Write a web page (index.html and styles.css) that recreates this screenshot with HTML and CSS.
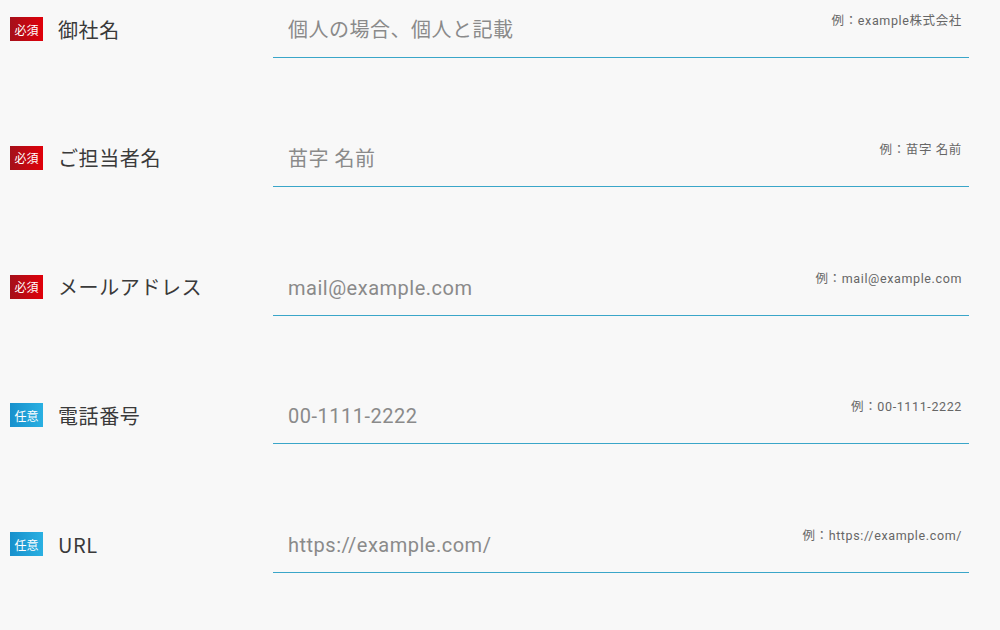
FILE: index.html
```html
<!DOCTYPE html>
<html lang="ja">
<head>
  <meta charset="UTF-8">
  <title>お問い合わせ</title>
  <link rel="stylesheet" href="styles.css">
</head>
<body>
  <form class="contact-form">
    <div class="form-row">
      <div class="form-label">
        <span class="badge badge-required">必須</span>
        <label for="company">御社名</label>
      </div>
      <div class="form-field">
        <input id="company" type="text" placeholder="個人の場合、個人と記載">
        <span class="example">例：example株式会社</span>
      </div>
    </div>

    <div class="form-row">
      <div class="form-label">
        <span class="badge badge-required">必須</span>
        <label for="name">ご担当者名</label>
      </div>
      <div class="form-field">
        <input id="name" type="text" placeholder="苗字 名前">
        <span class="example">例：苗字 名前</span>
      </div>
    </div>

    <div class="form-row">
      <div class="form-label">
        <span class="badge badge-required">必須</span>
        <label for="email">メールアドレス</label>
      </div>
      <div class="form-field">
        <input id="email" type="email" placeholder="mail@example.com">
        <span class="example">例：mail@example.com</span>
      </div>
    </div>

    <div class="form-row">
      <div class="form-label">
        <span class="badge badge-optional">任意</span>
        <label for="tel">電話番号</label>
      </div>
      <div class="form-field">
        <input id="tel" type="tel" placeholder="00-1111-2222">
        <span class="example">例：00-1111-2222</span>
      </div>
    </div>

    <div class="form-row">
      <div class="form-label">
        <span class="badge badge-optional">任意</span>
        <label for="url">URL</label>
      </div>
      <div class="form-field">
        <input id="url" type="url" placeholder="https://example.com/">
        <span class="example">例：https://example.com/</span>
      </div>
    </div>
  </form>
</body>
</html>
```

FILE: styles.css
```css
* {
  margin: 0;
  padding: 0;
  box-sizing: border-box;
}
body {
  font-family: "Noto Sans CJK JP", sans-serif;
  background-color: #f8f8f8;
  color: #333;
}
.contact-form {
  display: flex;
  flex-direction: column;
  gap: 70.75px;
}
.form-row {
  display: flex;
  align-items: center;
  height: 58px;
}
.form-label {
  display: flex;
  align-items: center;
  width: 273px;
  padding-left: 10px;
}
.form-label label {
  margin-left: 15px;
  font-size: 20px;
  letter-spacing: 0.03em;
  color: #3a3a3a;
}
.badge {
  display: flex;
  align-items: center;
  justify-content: center;
  width: 33px;
  height: 24px;
  font-size: 12px;
  color: #fff;
}
.badge-required {
  background: linear-gradient(to right, #a4101a, #e0000a);
}
.badge-optional {
  background: linear-gradient(to right, #1790cc, #2ab0e2);
}
.form-field {
  position: relative;
  width: 696px;
  height: 58px;
  border-bottom: 1px solid #3aa6c9;
}
.form-field input {
  width: 100%;
  height: 100%;
  padding: 3px 15px 0;
  border: none;
  background: transparent;
  font-family: Roboto, "Noto Sans CJK JP", sans-serif;
  font-size: 20px;
  letter-spacing: 0.025em;
  color: #333;
  outline: none;
}
.form-field input::placeholder {
  color: #8a8a8a;
}
.example {
  position: absolute;
  top: 10px;
  right: 7px;
  font-family: Roboto, "Noto Sans CJK JP", sans-serif;
  font-size: 12.5px;
  letter-spacing: 0.05em;
  color: #666;
}
```
